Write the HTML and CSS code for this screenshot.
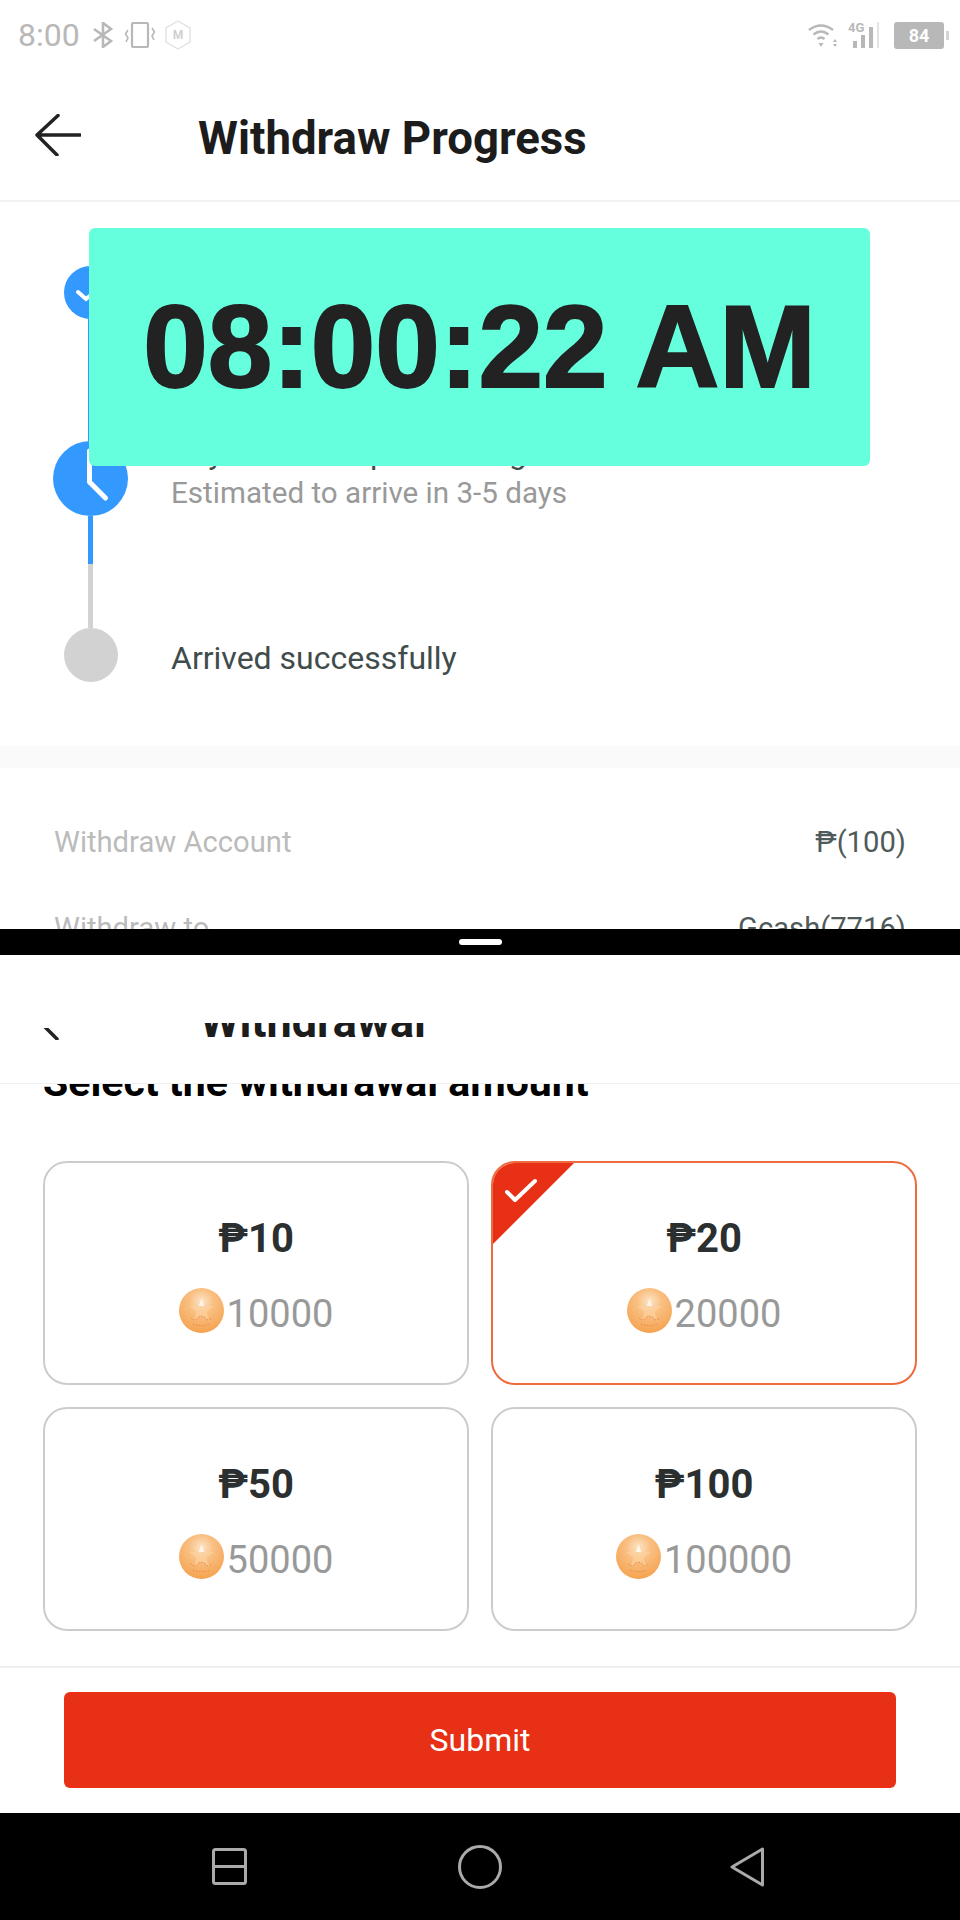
FILE: index.html
```html
<!DOCTYPE html>
<html lang="en">
  <head>
    <meta charset="UTF-8" />
    <meta name="viewport" content="width=device-width, initial-scale=1.0" />
    <title>Withdraw Progress</title>
    <link rel="stylesheet" href="styles.css">
  </head>
  <body>
    <svg class="defs" width="0" height="0">
      <defs>
        <radialGradient id="coin-fill" cx="50%" cy="30%" r="70%">
          <stop offset="0" stop-color="#fde6c8"></stop>
          <stop offset=".38" stop-color="#f9c084"></stop>
          <stop offset="1" stop-color="#f5a350"></stop>
        </radialGradient>
        <symbol id="coin" viewBox="0 0 45 45">
          <circle cx="22.500" cy="22.500" r="22.500" fill="url(#coin-fill)"></circle>
          <path d="M22.500 9l3.200 8.800 9.300.3-7.400 5.700 2.600 9-7.700-5.300-7.700 5.300 2.600-9-7.400-5.700 9.300-.3z" fill="#fbd3a2" opacity=".6"></path>
          <path d="M22.500 10l2.800 8h-5.600z" fill="#fff" opacity=".75"></path>
          <path d="M12 30q5 4 7-.5 3.500-2 7 0 2 4.500 7 .5M14 36q8.500 3.500 17 0" fill="none" stroke="#ea7a3c" stroke-width="1" stroke-dasharray="1.500 1.500" opacity=".85"></path>
        </symbol>
        <symbol id="back" viewBox="0 0 46 42">
          <path d="M45 21H3M23 1.500L2 21l20 20" fill="none" stroke="#222" stroke-width="3.500" stroke-linecap="round" stroke-linejoin="round"></path>
        </symbol>
      </defs>
    </svg>

    <main class="phone">
      <section class="top">
        <div class="status">
          <span class="clock">8:00</span>
          <svg class="ic-bt" viewBox="0 0 22 26"><path d="M2 7l17 12-8 6V1l8 6L2 19" fill="none" stroke="#b8b8b8" stroke-width="2.600"></path></svg>
          <svg class="ic-vib" viewBox="0 0 32 26"><rect x="8" y="1" width="16" height="24" rx="1.500" fill="none" stroke="#b8b8b8" stroke-width="2.200"></rect><path d="M4 8L1.500 12 4 16 2 20M28 6l2.500 4-2.500 4 2 4" fill="none" stroke="#b8b8b8" stroke-width="1.600"></path></svg>
          <svg class="ic-hex" viewBox="0 0 26 30"><path d="M13 1l12 7v14l-12 7-12-7V8z" fill="none" stroke="#e2e2e2" stroke-width="1.400"></path><text x="13" y="19" text-anchor="middle" class="hex-m">M</text></svg>
          <span class="status-gap"></span>
          <svg class="ic-wifi" viewBox="0 0 32 26"><path d="M1 8q12-9 24 0M5.500 12.500q7.500-6 15 0M9.500 17q3.500-3 7 0" fill="none" stroke="#b8b8b8" stroke-width="2.600"></path><path d="M10.500 21h5L13 25zM27 17l2 3h-4zM25 22h4l-2 3z" fill="#b8b8b8"></path></svg>
          <div class="ic-net">
            <span class="net-label">4G</span>
            <svg viewBox="0 0 30 26"><path d="M2 26v-7h4v7zM10 26V13h4v13zM18 26V5h4v21z" fill="#b8b8b8"></path><path d="M26 26V0h2v26z" fill="#e4e4e4"></path></svg>
          </div>
          <div class="battery"><span>84</span></div>
          <span class="battery-nub"></span>
        </div>

        <header class="head">
          <svg class="back"><use href="#back"></use></svg>
          <h1>Withdraw Progress</h1>
        </header>

        <div class="steps">
          <div class="step">
            <div class="step-mark">
              <svg class="dot-small" viewBox="0 0 53 53"><circle cx="26.500" cy="26.500" r="26.500" fill="#3399ff"></circle><path d="M14 26l8 7 16-13" fill="none" stroke="#fff" stroke-width="4" stroke-linecap="round"></path></svg>
              <span class="line line-first"></span>
            </div>
            <div class="step-text">
              <p class="step-title">Withdrawal application submitted</p>
            </div>
          </div>
          <div class="step">
            <div class="step-mark">
              <svg class="dot-big" viewBox="0 0 75 75"><circle cx="37.500" cy="37.500" r="37.500" fill="#3399ff"></circle><path d="M36.500 10v31l16 16" fill="none" stroke="#fff" stroke-width="5" stroke-linecap="round" stroke-linejoin="round"></path></svg>
              <span class="line line-blue"></span>
              <span class="line line-grey"></span>
            </div>
            <div class="step-text step-text-current">
              <p class="step-title">Payment is in processing</p>
              <p class="step-sub">Estimated to arrive in 3-5 days</p>
            </div>
          </div>
          <div class="step">
            <div class="step-mark">
              <span class="dot-off"></span>
            </div>
            <div class="step-text step-text-last">
              <p class="step-title">Arrived successfully</p>
            </div>
          </div>
        </div>

        <div class="band"></div>

        <div class="rows">
          <div class="row"><span>Withdraw Account</span><b>₱(100)</b></div>
          <div class="row"><span>Withdraw to</span><b>Gcash(7716)</b></div>
        </div>

        <div class="stamp">08:00:22 AM</div>
      </section>

      <div class="split"><span></span></div>

      <section class="bottom">
        <header class="sub-head">
          <div class="sub-clip">
            <svg class="back back-cut"><use href="#back"></use></svg>
            <h2>Withdrawal</h2>
          </div>
        </header>

        <div class="amounts">
          <div class="amounts-scroll">
            <h3>Select the withdrawal amount</h3>
            <div class="cards">
              <div class="card">
                <div class="price">₱10</div>
                <div class="coins"><svg class="coin"><use href="#coin"></use></svg><span>10000</span></div>
              </div>
              <div class="card active">
                <div class="corner">
                  <svg viewBox="0 0 85 85"><path d="M16 31l8 8 20-19" fill="none" stroke="#fff" stroke-width="4" stroke-linecap="round" stroke-linejoin="round"></path></svg>
                </div>
                <div class="price">₱20</div>
                <div class="coins"><svg class="coin"><use href="#coin"></use></svg><span>20000</span></div>
              </div>
              <div class="card">
                <div class="price">₱50</div>
                <div class="coins"><svg class="coin"><use href="#coin"></use></svg><span>50000</span></div>
              </div>
              <div class="card">
                <div class="price">₱100</div>
                <div class="coins"><svg class="coin"><use href="#coin"></use></svg><span>100000</span></div>
              </div>
            </div>
          </div>
        </div>

        <footer class="actions">
          <button class="submit">Submit</button>
        </footer>
      </section>

      <nav class="nav">
        <svg class="nav-recent" viewBox="0 0 35 37"><rect x="1.500" y="1.500" width="32" height="34" rx="2" fill="none" stroke="#aaa" stroke-width="3"></rect><path d="M1.500 18.500h32" stroke="#aaa" stroke-width="3"></path></svg>
        <svg class="nav-home" viewBox="0 0 44 44"><circle cx="22" cy="22" r="20.500" fill="none" stroke="#aaa" stroke-width="3"></circle></svg>
        <svg class="nav-back" viewBox="0 0 34 40"><path d="M32.500 2v36L2 20z" fill="none" stroke="#aaa" stroke-width="3" stroke-linejoin="round"></path></svg>
      </nav>
    </main>
  </body>
</html>
```

FILE: styles.css
```css
:root {
  --blue: #3399ff;
  --red: #e73015;
  --muted: #999;
  --ink: #2b2f2f;
}

* {
  box-sizing: border-box;
}

body {
  margin: 0;
  background: #fff;
  font-family: Roboto, "Noto Sans", sans-serif;
}

p,
h1,
h2,
h3 {
  margin: 0;
}

.defs {
  position: absolute;
}

.phone {
  display: flex;
  flex-direction: column;
  width: 960px;
  height: 1920px;
  overflow: hidden;
}

/* upper window */
.top {
  position: relative;
  height: 929px;
  overflow: hidden;
  flex: none;
}

.status {
  display: flex;
  align-items: center;
  height: 70px;
  padding: 0 11px 0 18px;
}

.clock {
  margin-right: 12px;
  color: #b8b8b8;
  font-size: 32px;
}

.ic-bt {
  width: 22px;
  height: 26px;
  margin-right: 10px;
}

.ic-vib {
  width: 32px;
  height: 26px;
  margin-right: 9px;
}

.ic-hex {
  width: 26px;
  height: 30px;
}

.hex-m {
  fill: #d0d0d0;
  font-size: 12px;
  font-weight: 700;
}

.status-gap {
  flex: 1;
}

.ic-wifi {
  width: 32px;
  height: 26px;
  margin-right: 7px;
}

.ic-net {
  position: relative;
  width: 34px;
  height: 26px;
  margin-right: 13px;
}

.ic-net svg {
  display: block;
  width: 30px;
  height: 26px;
  margin-left: 4px;
}

.net-label {
  position: absolute;
  top: -2px;
  left: 1px;
  color: #b8b8b8;
  font-size: 13px;
  font-weight: 700;
}

.battery {
  display: flex;
  justify-content: center;
  align-items: center;
  width: 50px;
  height: 27px;
  border-radius: 3px;
  background: #b8b8b8;
  color: #fff;
  font-size: 18px;
  font-weight: 700;
}

.battery-nub {
  width: 3px;
  height: 9px;
  margin-left: 2px;
  background: #d4d4d4;
}

.head {
  display: flex;
  align-items: center;
  height: 132px;
  padding-left: 35px;
  border-bottom: 2px solid #f2f2f2;
}

.back {
  display: block;
  width: 46px;
  height: 42px;
  flex: none;
}

.head h1 {
  margin: 6px 0 0 117px;
  color: #1c1c1c;
  font-size: 45.6px;
  font-weight: 700;
}

.steps {
  padding: 64px 0 0 53px;
}

.step {
  display: flex;
  gap: 43px;
}

.step-mark {
  display: flex;
  flex-direction: column;
  align-items: center;
  width: 75px;
  flex: none;
}

.dot-small {
  display: block;
  width: 53px;
  height: 53px;
}

.dot-big {
  display: block;
  width: 75px;
  height: 75px;
}

.dot-off {
  display: block;
  width: 54px;
  height: 54px;
  border-radius: 50%;
  background: #d2d2d2;
}

.line {
  display: block;
  width: 5px;
}

.line-first {
  height: 122px;
  background: var(--blue);
}

.line-blue {
  height: 48px;
  background: var(--blue);
}

.line-grey {
  height: 64px;
  background: #d2d2d2;
}

.step-title {
  color: #3f4c4b;
  font-size: 32px;
  line-height: 36px;
}

.step-text-current {
  margin-top: -6px;
}

.step-text-last {
  padding-top: 12px;
}

.step-sub {
  margin-top: 4px;
  color: var(--muted);
  font-size: 29.6px;
  line-height: 36px;
}

.band {
  height: 22px;
  margin-top: 64px;
  background: #fafafa;
}

.rows {
  padding: 56px 54px 0;
}

.row {
  display: flex;
  justify-content: space-between;
  margin-bottom: 50px;
  color: #bbb;
  font-size: 29.2px;
  line-height: 36px;
}

.row b {
  color: #4f5b5a;
  font-weight: 400;
}

.stamp {
  position: absolute;
  top: 228px;
  left: 89px;
  display: flex;
  justify-content: center;
  align-items: center;
  width: 781px;
  height: 238px;
  border-radius: 6px;
  background: #66ffdd;
  color: #222;
  font-family: "Liberation Sans", Arial, sans-serif;
  font-size: 116px;
  font-weight: 700;
  -webkit-text-stroke: 2px #222;
}

.split {
  display: flex;
  justify-content: center;
  align-items: center;
  height: 26px;
  flex: none;
  background: #000;
}

.split span {
  width: 43px;
  height: 6px;
  border-radius: 3px;
  background: #fff;
}

/* lower window */
.bottom {
  display: flex;
  flex-direction: column;
  flex: 1;
  min-height: 0;
}

.sub-head {
  height: 129px;
  padding-top: 68px;
  flex: none;
  border-bottom: 1px solid #f0f0f0;
}

.sub-clip {
  display: flex;
  height: 60px;
  padding-left: 35px;
  overflow: hidden;
}

.back-cut {
  margin-top: -25px;
  clip-path: inset(30px 0 0 0);
}

.sub-clip h2 {
  margin: -21px 0 0 119px;
  color: #1c1c1c;
  font-size: 45px;
  font-weight: 700;
  line-height: 40px;
}

.amounts {
  height: 584px;
  flex: none;
  overflow: hidden;
  border-bottom: 2px solid #eee;
}

.amounts-scroll {
  padding: 0 43px;
}

.amounts h3 {
  margin-top: -24px;
  color: #000;
  font-size: 41px;
  font-weight: 700;
  line-height: 44px;
}

.cards {
  display: grid;
  grid-template-columns: 426px 426px;
  grid-auto-rows: 224px;
  gap: 22px;
  margin-top: 57px;
}

.card {
  position: relative;
  display: flex;
  flex-direction: column;
  justify-content: center;
  align-items: center;
  gap: 25px;
  padding-top: 2px;
  overflow: hidden;
  border: 2px solid #cccccc;
  border-radius: 24px;
}

.card.active {
  border-color: #ee6a3f;
}

.corner {
  position: absolute;
  top: -2px;
  left: -2px;
  width: 85px;
  height: 85px;
  background: var(--red);
  clip-path: polygon(0 0, 100% 0, 0 100%);
}

.corner svg {
  display: block;
}

.price {
  color: var(--ink);
  font-size: 40px;
  font-weight: 700;
  line-height: 48px;
}

.coins {
  display: flex;
  align-items: center;
  gap: 3px;
  height: 45px;
  color: var(--muted);
  font-size: 38px;
}

.coins span {
  margin-top: 6px;
}

.coin {
  width: 45px;
  height: 45px;
}

.actions {
  display: flex;
  justify-content: center;
  padding-top: 24px;
}

.submit {
  width: 832px;
  height: 96px;
  border: 0;
  border-radius: 6px;
  background: var(--red);
  color: #fff;
  font-family: inherit;
  font-size: 32px;
}

.nav {
  display: flex;
  align-items: center;
  height: 107px;
  flex: none;
  padding: 0 0 0 212px;
  background: #000;
}

.nav-recent {
  width: 35px;
  height: 37px;
}

.nav-home {
  width: 44px;
  height: 44px;
  margin: 0 228px 0 211px;
}

.nav-back {
  width: 34px;
  height: 40px;
}
```
